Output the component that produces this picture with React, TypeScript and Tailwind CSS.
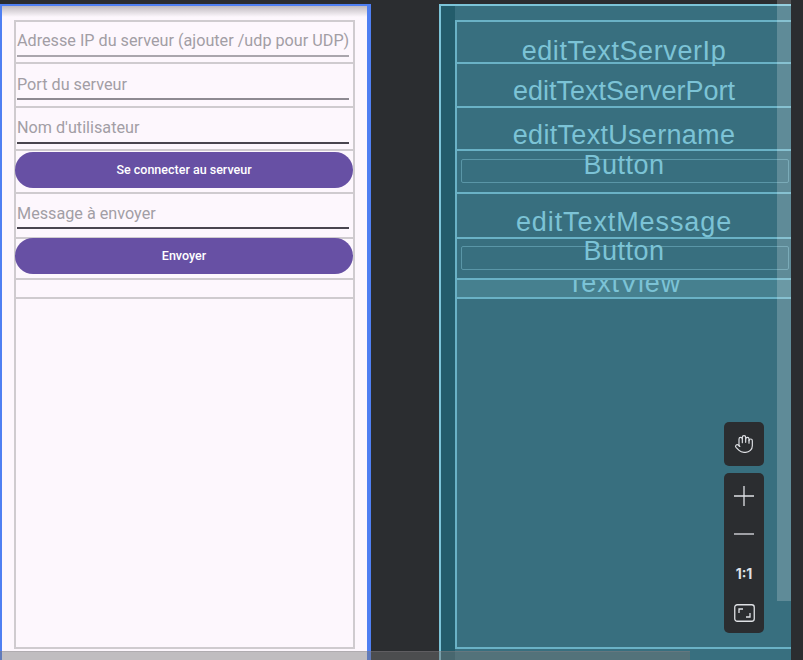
import { Hand } from "lucide-react";

const phoneRow = "border-b-2 border-[#cfcbcf]";
const bpRow = "relative border-b-2 border-[#6ab2c6]";
const bpLabel =
    "absolute inset-x-0 text-center text-[27px] leading-none text-[#7cc3d6] whitespace-nowrap";

function HintField({
    hint,
    pt,
    gap,
    line,
    h,
}: {
    hint: string;
    pt: string;
    gap: string;
    line: string;
    h: string;
}) {
    return (
        <div className={`${phoneRow} ${h} ${pt} pl-[1px] pr-[4px]`}>
            <div className="text-[16.2px] leading-[20px] text-[#a29ea5] whitespace-nowrap">{hint}</div>
            <div className={`${gap} h-[2px] ${line}`} />
        </div>
    );
}

function PhonePreview() {
    return (
        <div className="relative w-[371px] h-[660px] shrink-0 border-l-2 border-t-2 border-r-4 border-[#4f7ff2] bg-[#fdf7fd] pl-[12px] pr-[12px] pt-[14px] font-['Roboto',sans-serif]">
            {/* top shadow */}
            <div className="absolute left-0 right-0 top-0 h-[11px] bg-gradient-to-b from-[#bfbabf] to-transparent" />

            <div className="flex flex-col border-2 border-[#cfcbcf]">
                <HintField
                    hint="Adresse IP du serveur (ajouter /udp pour UDP)"
                    h="h-[42px]"
                    pt="pt-[9px]"
                    gap="mt-[4px]"
                    line="bg-[#aaa6ad]"
                />
                <HintField hint="Port du serveur" h="h-[44px]" pt="pt-[11px]" gap="mt-[3px]" line="bg-[#8e8a92]" />
                <HintField hint="Nom d'utilisateur" h="h-[43px]" pt="pt-[10px]" gap="mt-[4px]" line="bg-[#49454f]" />
                <div className={`${phoneRow} h-[43px] pt-[1px]`}>
                    <div className="-ml-px h-[36px] rounded-full bg-[#6750a4] flex items-center justify-center text-white text-[12.5px] font-medium">
                        Se connecter au serveur
                    </div>
                </div>
                <HintField hint="Message à envoyer" h="h-[45px]" pt="pt-[10px]" gap="mt-[3px]" line="bg-[#49454f]" />
                <div className={`${phoneRow} h-[41px]`}>
                    <div className="-ml-px -mt-px h-[36px] rounded-full bg-[#6750a4] flex items-center justify-center text-white text-[12.5px] font-medium">
                        Envoyer
                    </div>
                </div>
                <div className={`${phoneRow} h-[19px]`} />
                <div className="h-[348px]" />
            </div>
        </div>
    );
}

function Blueprint() {
    return (
        <div className="ml-[68px] w-[352px] h-[660px] shrink-0 flex border-l-2 border-t-2 border-[#7cc4d8] bg-[#386f7f] font-['Liberation_Sans',Arial,sans-serif]">
            <div className="w-[14px] shrink-0 bg-[#235c6b]" />
            <div className="flex-1 pt-[14px]">
                <div className="flex flex-col border-l-2 border-t-2 border-b-2 border-[#6ab2c6]">
                    <div className={`${bpRow} h-[42px]`}>
                        <div className={`${bpLabel} top-[16px] tracking-[0.6px]`}>editTextServerIp</div>
                    </div>
                    <div className={`${bpRow} h-[44px]`}>
                        <div className={`${bpLabel} top-[14px]`}>editTextServerPort</div>
                    </div>
                    <div className={`${bpRow} h-[43px]`}>
                        <div className={`${bpLabel} top-[14px] tracking-[0.3px]`}>editTextUsername</div>
                    </div>
                    <div className={`${bpRow} h-[43px] pt-[8px] pl-[4px]`}>
                        <div className="w-[328px] h-[24px] rounded-[2px] border border-[#5a96a7]" />
                        <div className={`${bpLabel} top-[1px] tracking-[0.45px]`}>Button</div>
                    </div>
                    <div className={`${bpRow} h-[45px]`}>
                        <div className={`${bpLabel} top-[15px] tracking-[0.9px]`}>editTextMessage</div>
                    </div>
                    <div className={`${bpRow} h-[41px] pt-[7px] pl-[4px]`}>
                        <div className="w-[328px] h-[24px] rounded-[2px] border border-[#5a96a7]" />
                        <div className={`${bpLabel} top-[-1px] tracking-[0.45px]`}>Button</div>
                    </div>
                    <div className={`${bpRow} h-[19px] overflow-hidden bg-[#46808f]`}>
                        <div className={`${bpLabel} top-[-10px] tracking-[0.8px]`}>TextView</div>
                    </div>
                    <div className="h-[348px]" />
                </div>
            </div>
        </div>
    );
}

function ZoomControls() {
    return (
        <div className="absolute left-[724px] top-[422px] w-[40px] flex flex-col gap-[7px] text-[#dfe1e5] font-['Inter',sans-serif]">
            <div className="h-[44px] rounded-[5px] bg-[#2b2d30] flex items-center justify-center">
                <Hand className="w-[20px] h-[20px]" strokeWidth={1.4} />
            </div>
            <div className="h-[160px] rounded-[5px] bg-[#2b2d30] flex flex-col items-center pt-[13px]">
                <svg width="20" height="20" viewBox="0 0 20 20" className="shrink-0">
                    <path d="M10 0v20M0 10h20" stroke="currentColor" strokeWidth="1.3" />
                </svg>
                <svg width="20" height="20" viewBox="0 0 20 20" className="mt-[18px] shrink-0">
                    <path d="M0 10h20" stroke="currentColor" strokeWidth="1.3" />
                </svg>
                <div className="mt-[22px] text-[14px] font-bold leading-[16px]">1:1</div>
                <svg width="21" height="18" viewBox="0 0 21 18" className="mt-[22px] shrink-0">
                    <rect x="0.75" y="0.75" width="19.5" height="16.5" rx="2.5" fill="none" stroke="currentColor" strokeWidth="1.3" />
                    <path d="M5 9V5h4M16 9v4h-4" fill="none" stroke="currentColor" strokeWidth="1.3" />
                </svg>
            </div>
        </div>
    );
}

export default function App() {
    return (
        <div className="relative w-[803px] h-[660px] overflow-hidden bg-[#2b2d30]">
            <div className="flex pt-[4px]">
                <PhonePreview />
                <Blueprint />
            </div>

            <ZoomControls />

            {/* vertical scrollbar */}
            <div className="absolute left-[777px] top-0 w-[14px] h-[601px] bg-white/20" />
            {/* horizontal scrollbar */}
            <div className="absolute left-0 top-[651px] w-[690px] h-[9px] bg-[#767676]/45 border-t border-[#8a868b]/30" />
        </div>
    );
}
